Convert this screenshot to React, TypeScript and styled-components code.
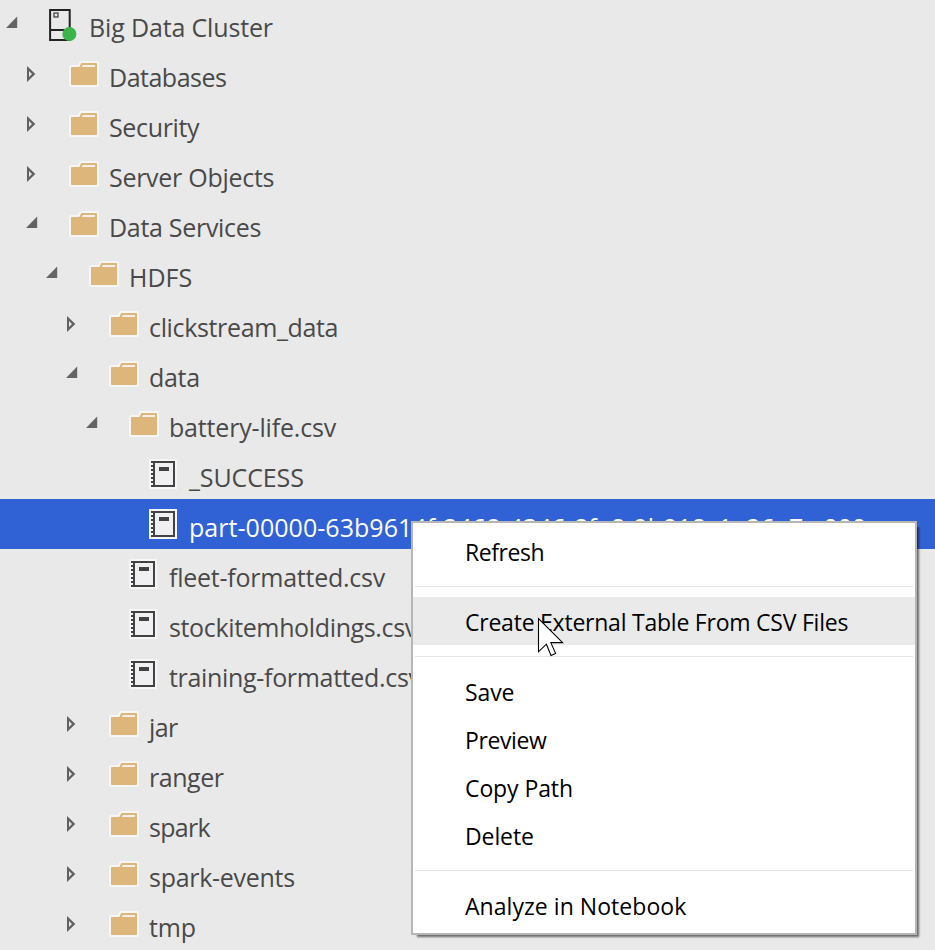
import React from 'react';
import styled, { createGlobalStyle } from 'styled-components';

const GlobalStyle = createGlobalStyle`
  * { box-sizing: border-box; }
  body { margin: 0; background: #e9e9e9; overflow: hidden; }
`;

const Explorer = styled.main`
  position: relative;
  width: 935px;
  height: 950px;
  overflow: hidden;
  background: #e9e9e9;
  font-family: 'Open Sans', 'Noto Sans', sans-serif;
`;

const Tree = styled.ul`
  margin: -1px 0 0;
  padding: 0;
  list-style: none;
`;

const TreeRow = styled.li<{ $level: number; $selected?: boolean }>`
  display: flex;
  align-items: flex-start;
  height: 50px;
  padding-left: ${(p) => p.$level * 20}px;
  background: ${(p) => (p.$selected ? '#3062d6' : 'transparent')};
  color: ${(p) => (p.$selected ? '#fff' : '#494949')};
`;

const Twistie = styled.span`
  flex: 0 0 49px;
  padding: 17px 0 0 6px;
  svg { display: block; }
`;

const IconCell = styled.span<{ $top: number }>`
  flex: 0 0 40px;
  padding-top: ${(p) => p.$top}px;
  svg { display: block; }
`;

const Label = styled.span<{ $tracking: number }>`
  margin-top: 3px;
  font-size: 25px;
  line-height: 50px;
  letter-spacing: ${(p) => p.$tracking}px;
  white-space: nowrap;
`;

const Menu = styled.div`
  position: absolute;
  left: 411px;
  top: 521px;
  width: 506px;
  height: 414px;
  padding: 4px 0;
  border: 2px solid #b6b6b6;
  background: #fff;
  box-shadow: 4px 4px 2px -2px rgba(0, 0, 0, 0.55);
`;

const MenuItem = styled.div<{ $active?: boolean; $tracking: number }>`
  height: 48px;
  padding: 1px 0 0 52px;
  background: ${(p) => (p.$active ? '#eaeaea' : 'transparent')};
  color: #000;
  font-size: 23px;
  line-height: 48px;
  letter-spacing: ${(p) => p.$tracking}px;
  white-space: nowrap;
`;

const Separator = styled.div`
  height: 1px;
  margin: 11px 2px 10px;
  background: #e4e4e4;
`;

const Pointer = styled.svg`
  position: absolute;
  left: 537px;
  top: 616px;
`;

const Expanded = () => (
  <svg width="12" height="16">
    <path d="M11.2 0.6V12H0Z" fill="#646464" />
  </svg>
);

const Collapsed = () => (
  <svg width="12" height="18">
    <path fillRule="evenodd" d="M1 0L9.3 8L1 16ZM3 5V11L6 8Z" fill="#606060" />
  </svg>
);

const FolderIcon = () => (
  <svg width="30" height="26">
    <path d="M2 6H10.3L12.3 2H28V24H2Z" fill="#f6f6f6" stroke="#f6f6f6" strokeWidth="4" strokeLinejoin="round" />
    <path d="M2.5 6H10.3L12.3 2H27.5L28 2.5V23.5L27.5 24H2.5L2 23.5V6.5Z" fill="#dcb67a" />
    <path d="M13.9 4H26V6H12.8Z" fill="#f3efea" />
  </svg>
);

const TEETH = [2, 6, 10, 14, 18, 22, 26];

const FileIcon = () => (
  <svg width="28" height="30" shapeRendering="crispEdges">
    <rect width="28" height="30" fill="#f6f6f6" />
    <rect x="5" y="3" width="20" height="24" fill="#f0eff1" stroke="#424242" strokeWidth="2" />
    {TEETH.map((y) => (
      <rect key={y} x="2" y={y} width="2" height="2" fill="#424242" />
    ))}
    <rect x="10" y="8" width="10" height="4" fill="#424242" />
  </svg>
);

const ServerIcon = () => (
  <svg width="28" height="33">
    <path d="M1.1 1H20.7V31H1.1ZM1.1 21H20.7" fill="none" stroke="#222" strokeWidth="2" />
    <rect x="5" y="4" width="4" height="4" fill="none" stroke="#444" strokeWidth="1.3" />
    <circle cx="20.4" cy="25" r="7" fill="#3bb44a" />
  </svg>
);

const icons = {
  server: { top: 10, Icon: ServerIcon },
  folder: { top: 12, Icon: FolderIcon },
  file: { top: 10, Icon: FileIcon },
};

interface Node {
  label: string;
  level: number;
  icon: keyof typeof icons;
  open?: boolean;
  selected?: boolean;
  tracking: number;
}

const nodes: Node[] = [
  { label: 'Big Data Cluster', level: 0, icon: 'server', open: true, tracking: -0.15 },
  { label: 'Databases', level: 1, icon: 'folder', open: false, tracking: -0.5 },
  { label: 'Security', level: 1, icon: 'folder', open: false, tracking: -0.34 },
  { label: 'Server Objects', level: 1, icon: 'folder', open: false, tracking: -0.28 },
  { label: 'Data Services', level: 1, icon: 'folder', open: true, tracking: -0.3 },
  { label: 'HDFS', level: 2, icon: 'folder', open: true, tracking: 0 },
  { label: 'clickstream_data', level: 3, icon: 'folder', open: false, tracking: -0.35 },
  { label: 'data', level: 3, icon: 'folder', open: true, tracking: -0.3 },
  { label: 'battery-life.csv', level: 4, icon: 'folder', open: true, tracking: -0.18 },
  { label: '_SUCCESS', level: 5, icon: 'file', tracking: -0.12 },
  {
    label: 'part-00000-63b9614f-2468-4346-8fe8-9b918c1a26e7-c000',
    level: 5,
    icon: 'file',
    selected: true,
    tracking: 0.04,
  },
  { label: 'fleet-formatted.csv', level: 4, icon: 'file', tracking: -0.24 },
  { label: 'stockitemholdings.csv', level: 4, icon: 'file', tracking: -0.36 },
  { label: 'training-formatted.csv', level: 4, icon: 'file', tracking: -0.32 },
  { label: 'jar', level: 3, icon: 'folder', open: false, tracking: -0.6 },
  { label: 'ranger', level: 3, icon: 'folder', open: false, tracking: -0.45 },
  { label: 'spark', level: 3, icon: 'folder', open: false, tracking: -0.7 },
  { label: 'spark-events', level: 3, icon: 'folder', open: false, tracking: -0.28 },
  { label: 'tmp', level: 3, icon: 'folder', open: false, tracking: -0.2 },
];

export default function App() {
  return (
    <Explorer>
      <GlobalStyle />
      <Tree>
        {nodes.map(({ label, level, icon, open, selected, tracking }) => {
          const { top, Icon } = icons[icon];
          return (
            <TreeRow key={label} $level={level} $selected={selected}>
              <Twistie>{open === undefined ? null : open ? <Expanded /> : <Collapsed />}</Twistie>
              <IconCell $top={top}>
                <Icon />
              </IconCell>
              <Label $tracking={tracking}>{label}</Label>
            </TreeRow>
          );
        })}
      </Tree>
      <Menu>
        <MenuItem $tracking={-0.45}>Refresh</MenuItem>
        <Separator />
        <MenuItem $active $tracking={-0.23}>Create External Table From CSV Files</MenuItem>
        <Separator />
        <MenuItem $tracking={-0.1}>Save</MenuItem>
        <MenuItem $tracking={-0.38}>Preview</MenuItem>
        <MenuItem $tracking={-0.1}>Copy Path</MenuItem>
        <MenuItem $tracking={-0.1}>Delete</MenuItem>
        <Separator />
        <MenuItem $tracking={0.05}>Analyze in Notebook</MenuItem>
      </Menu>
      <Pointer width="28" height="42">
        <path
          d="M1.5 2.5V35.8L9.4 28.2L14 39.4L18.6 37.4L13.8 26.6H25.6Z"
          fill="#fff"
          stroke="#000"
          strokeWidth="1.1"
        />
      </Pointer>
    </Explorer>
  );
}
